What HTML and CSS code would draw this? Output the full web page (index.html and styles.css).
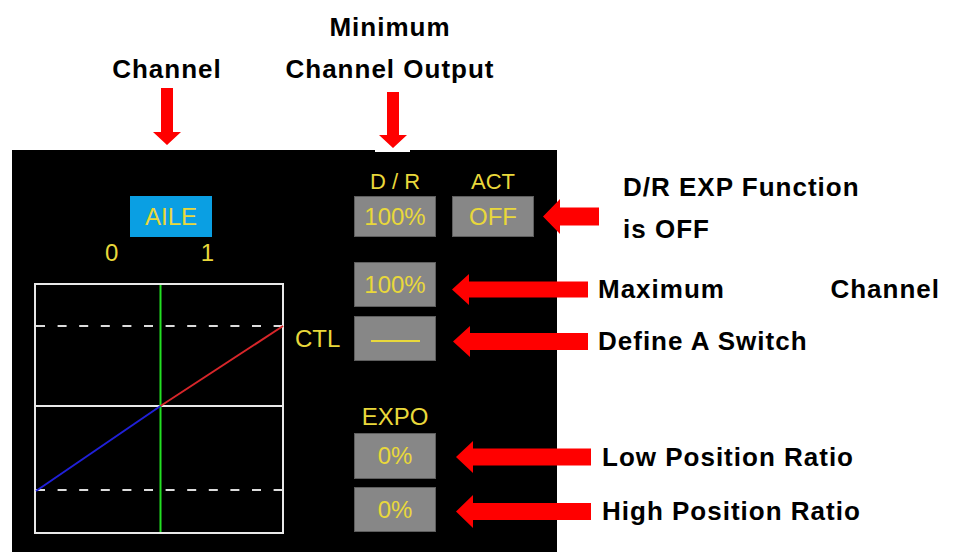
FILE: index.html
```html
<!DOCTYPE html>
<html>
  <head>
    <title>D/R EXP</title>
    <link rel="stylesheet" href="styles.css">
  </head>
  <body>
    <header class="heads">
      <div class="head head-channel">
        <p class="head-text">Channel</p>
        <svg class="down" width="28" height="57" viewBox="0 0 28 57">
          <path d="M8 0H20V44H28L14 57L0 44H8Z" fill="#ff0000"/>
        </svg>
      </div>
      <div class="head head-min">
        <p class="head-text">Minimum<br>Channel Output</p>
        <svg class="down down-min" width="35" height="60" viewBox="0 0 35 60">
          <path d="M12 0H24V43H32L18 56L4 43H12Z" fill="#ff0000"/>
        </svg>
      </div>
    </header>

    <main class="screen">
      <section class="curve-side">
        <div class="chan">AILE</div>
        <div class="scale"><span>0</span><span>1</span></div>
        <div class="graph-row">
          <svg class="graph" width="250" height="251" viewBox="0 0 250 251">
            <rect x="1" y="1" width="248" height="249" fill="none" stroke="#e8e8e8" stroke-width="2"/>
            <line x1="2" y1="43" x2="248" y2="43" stroke="#dcdcdc" stroke-width="2" stroke-dasharray="9 12.6"/>
            <line x1="2" y1="207" x2="248" y2="207" stroke="#dcdcdc" stroke-width="2" stroke-dasharray="9 12.6"/>
            <line x1="2" y1="123" x2="248" y2="123" stroke="#e8e8e8" stroke-width="2"/>
            <line x1="126.5" y1="2" x2="126.5" y2="249" stroke="#22e022" stroke-width="2"/>
            <line x1="126.5" y1="123" x2="249" y2="43" stroke="#d8262a" stroke-width="2"/>
            <line x1="2" y1="208" x2="126.5" y2="123" stroke="#2020d8" stroke-width="2"/>
          </svg>
          <span class="ctl">CTL</span>
        </div>
      </section>

      <section class="rate-side">
        <div class="row titles">
          <span>D / R</span>
          <span>ACT</span>
        </div>

        <div class="row row-act">
          <div class="box box-short">100%</div>
          <div class="box box-short box-act">OFF</div>
          <div class="callout callout-act">
            <svg width="56" height="35" viewBox="0 0 56 35">
              <path d="M0 17.5L17 0V8.5H56V26.5H17V35Z" fill="#ff0000"/>
            </svg>
            <p class="note note-act">D/R EXP Function<br>is OFF</p>
          </div>
        </div>

        <div class="row row-max">
          <div class="box">100%</div>
          <div class="callout callout-max">
            <svg width="136" height="31" viewBox="0 0 136 31">
              <path d="M0 15.5L17 0V7.5H136V23.5H17V31Z" fill="#ff0000"/>
            </svg>
            <p class="note note-max"><span>Maximum</span><span>Channel</span></p>
          </div>
        </div>

        <div class="row row-switch">
          <div class="box"><span class="dash"></span></div>
          <div class="callout callout-switch">
            <svg width="135" height="31" viewBox="0 0 135 31">
              <path d="M0 15.5L17 0V7H135V24H17V31Z" fill="#ff0000"/>
            </svg>
            <p class="note note-switch">Define A Switch</p>
          </div>
        </div>

        <div class="expo">EXPO</div>

        <div class="row row-low">
          <div class="box box-tall">0%</div>
          <div class="callout callout-low">
            <svg width="135" height="32" viewBox="0 0 135 32">
              <path d="M0 16L17 0V7.5H135V24.5H17V32Z" fill="#ff0000"/>
            </svg>
            <p class="note note-low">Low Position Ratio</p>
          </div>
        </div>

        <div class="row row-high">
          <div class="box">0%</div>
          <div class="callout callout-high">
            <svg width="135" height="33" viewBox="0 0 135 33">
              <path d="M0 16.5L17 0V8H135V25H17V33Z" fill="#ff0000"/>
            </svg>
            <p class="note note-high">High Position Ratio</p>
          </div>
        </div>
      </section>
    </main>
  </body>
</html>
```

FILE: styles.css
```css
* { box-sizing: border-box; }
body {
  margin: 0;
  width: 957px;
  height: 552px;
  overflow: hidden;
  background: #fff;
  font-family: "Liberation Sans", Arial, sans-serif;
}
svg { display: block; flex: none; }

/* headings above the screen */
.heads {
  position: relative;
  z-index: 1;
  display: flex;
  gap: 3px;
  height: 150px;
  padding: 5.5px 0 0 67px;
}
.head {
  display: flex;
  flex-direction: column;
  align-items: center;
}
.head-channel { width: 200px; padding-top: 42px; }
.head-min { width: 240px; }
.head-text, .note {
  margin: 0;
  color: #000;
  font-size: 26px;
  font-weight: bold;
  letter-spacing: 1px;
  line-height: 42px;
}
.head-text { text-align: center; }
.down { margin-top: -1.5px; }
.down-min { margin: 2.5px 0 0 5px; background: #fff; }

/* the black radio screen */
.screen {
  display: flex;
  width: 545px;
  height: 402px;
  margin-left: 12px;
  background: #000;
  color: #e9d83b;
  font-size: 24px;
}
.curve-side {
  flex: none;
  width: 342px;
  padding: 46px 0 0 22px;
}
.chan {
  width: 82px;
  height: 41px;
  margin-left: 96px;
  background: #0a9fe3;
  line-height: 41px;
  text-align: center;
}
.scale {
  display: flex;
  justify-content: space-between;
  width: 109px;
  margin: 4px 0 0 71px;
  line-height: 24px;
}
.graph-row { display: flex; margin-top: 18px; }
.ctl { margin: 44px 0 0 11px; line-height: 24px; }

.rate-side {
  flex: none;
  display: flex;
  flex-direction: column;
  padding-top: 20px;
}
.row { display: flex; align-items: flex-start; }
.titles { gap: 16px; font-size: 22px; line-height: 24px; }
.titles span { width: 82px; text-align: center; }

.box {
  flex: none;
  display: flex;
  align-items: center;
  justify-content: center;
  width: 82px;
  height: 45px;
  background: #878787;
  border: 1px solid #5e5e5e;
}
.box-short { height: 41px; }
.box-tall { height: 46px; }
.box-act { margin-left: 16px; }
.dash {
  width: 49px;
  height: 2px;
  margin-top: 4px;
  background: #e9d83b;
}
.expo {
  width: 82px;
  margin-top: 44px;
  font-size: 24px;
  line-height: 24px;
  text-align: center;
}

/* red arrows with their notes */
.callout { display: flex; align-items: center; }
.row-act { margin-top: 2px; align-items: center; }
.callout-act { margin-left: 9px; }
.note-act { margin: -30.5px 0 -12.5px 24px; }

.row-max { margin-top: 25px; }
.callout-max { margin: 11.5px 0 0 16px; }
.note-max {
  display: flex;
  justify-content: space-between;
  width: 342px;
  margin-left: 10px;
  line-height: 31px;
}

.row-switch { margin-top: 9px; }
.callout-switch { margin: 10px 0 0 17px; }
.note-switch { margin-left: 10px; line-height: 31px; white-space: nowrap; }

.row-low { margin-top: 4px; }
.callout-low { margin: 8px 0 0 20px; }
.note-low { margin-left: 11px; line-height: 32px; white-space: nowrap; }

.row-high { margin-top: 8px; }
.callout-high { margin: 8px 0 0 20px; }
.note-high { margin-left: 11px; line-height: 33px; white-space: nowrap; }
```
